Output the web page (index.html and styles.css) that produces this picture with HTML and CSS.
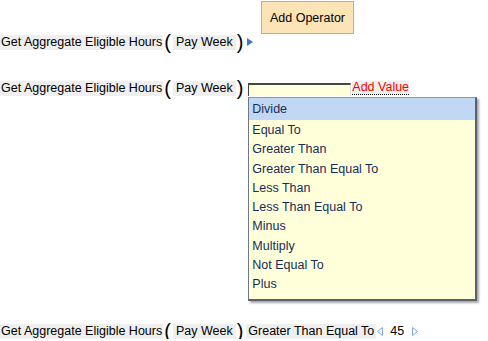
FILE: index.html
```html
<!DOCTYPE html>
<html lang="en">
<head>
    <meta charset="UTF-8">
    <title>Expression Builder</title>
    <link rel="stylesheet" href="styles.css">
</head>
<body>
    <div class="toolbar">
        <button class="add-operator">Add Operator</button>
    </div>

    <div class="expr expr-first">
        <span class="func">Get Aggregate Eligible Hours</span><span class="paren">(</span><span class="arg">Pay Week</span><span class="paren">)</span>
        <svg class="expand" width="6" height="8" viewBox="0 0 6 8"><polygon points="0,0 6,4 0,8" fill="#3f77c0"/></svg>
    </div>

    <div class="expr expr-edit">
        <span class="func">Get Aggregate Eligible Hours</span><span class="paren">(</span><span class="arg">Pay Week</span><span class="paren">)</span>
        <div class="picker">
            <div class="picker-input"></div>
            <!-- operator menu -->
            <ul class="operator-list">
                <li class="selected">Divide</li>
                <li>Equal To</li>
                <li>Greater Than</li>
                <li>Greater Than Equal To</li>
                <li>Less Than</li>
                <li>Less Than Equal To</li>
                <li>Minus</li>
                <li>Multiply</li>
                <li>Not Equal To</li>
                <li>Plus</li>
            </ul>
        </div>
        <span class="add-value">Add Value</span>
    </div>

    <div class="expr expr-done">
        <span class="func">Get Aggregate Eligible Hours</span><span class="paren">(</span><span class="arg">Pay Week</span><span class="paren">)</span><span class="arg op">Greater Than Equal To</span>
        <svg class="step" width="6" height="9" viewBox="0 0 6 9"><polygon points="5.5,0.5 5.5,8.5 0.5,4.5" fill="none" stroke="#7fa6d8"/></svg>
        <span class="value">45</span>
        <svg class="step step-right" width="6" height="9" viewBox="0 0 6 9"><polygon points="0.5,0.5 0.5,8.5 5.5,4.5" fill="none" stroke="#7fa6d8"/></svg>
    </div>
</body>
</html>
```

FILE: styles.css
```css
body {
    margin: 0;
    font-family: "Liberation Sans", Arial, sans-serif;
    font-size: 12.5px;
    color: #000;
    background: #fff;
}
.toolbar {
    height: 34px;
    padding-left: 261px;
    padding-top: 1px;
    box-sizing: border-box;
}
.add-operator {
    display: block;
    width: 93px;
    height: 33px;
    margin: 0;
    padding: 0;
    font: inherit;
    color: #000;
    background: #fde4b6;
    border: 1px solid #e8a64e;
}
.expr {
    display: flex;
    align-items: center;
    height: 16px;
    white-space: nowrap;
}
.expr-edit {
    margin-top: 30px;
}
.expr-done {
    margin-top: 227px;
}
.func {
    background: #efefef;
    padding: 0 1px 0 1px;
    line-height: 15px;
}
.paren {
    font-size: 20px;
    line-height: 16px;
    margin: 0 1px;
}
.arg {
    background: #efefef;
    padding: 0 3px;
    margin-left: 1px;
    line-height: 15px;
}
.arg.op {
    margin-left: 2px;
    padding: 0 2px;
}
.expand {
    margin-left: 3px;
}
.picker {
    position: relative;
    margin-left: 4px;
    align-self: flex-end;
}
.picker-input {
    width: 101px;
    height: 11px;
    background: #ffffdc;
    border-top: 2px solid #454545;
    border-left: 1px solid #454545;
    border-right: 1px solid #ddd;
}
.operator-list {
    position: absolute;
    left: 0;
    top: 14px;
    width: 226px;
    margin: 0;
    padding: 0 0 5px 0;
    list-style: none;
    background: #ffffda;
    border-top: 1px solid #8b99ad;
    border-left: 1px solid #6e7888;
    border-right: 2px solid #5a6070;
    border-bottom: 2px solid #5a6070;
    box-shadow: 2px 2px 2px rgba(0, 0, 0, 0.35);
    z-index: 2;
}
.operator-list li {
    color: #162c5c;
    padding-left: 3px;
    line-height: 19.25px;
}
.operator-list li.selected {
    background: #c1d8f4;
    line-height: 22px;
    margin-bottom: 1px;
}
.add-value {
    color: #ff0000;
    background: #efefef;
    border-bottom: 1px dotted #000;
    line-height: 13px;
    margin-left: 1px;
}
.step {
    margin-left: 1px;
}
.value {
    margin-left: 7px;
}
.step-right {
    margin-left: 8px;
}
```
